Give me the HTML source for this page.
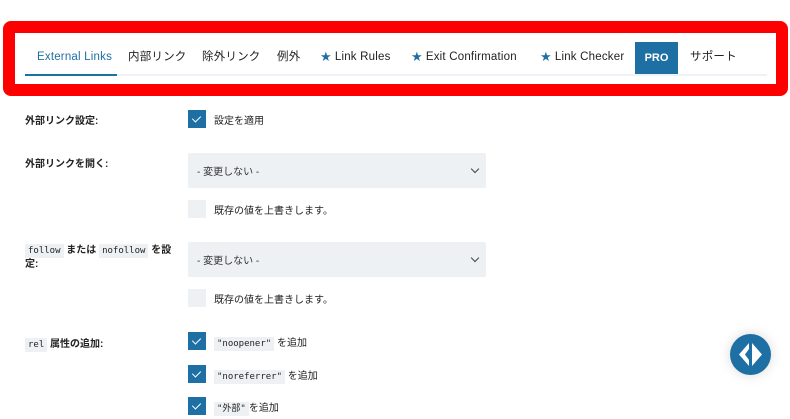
<!DOCTYPE html>
<html><head><meta charset="utf-8"><style>
*{margin:0;padding:0;box-sizing:border-box}
body{width:790px;height:419px;overflow:hidden;background:#fff;font-family:"Liberation Sans","Noto Sans CJK JP",sans-serif;color:#222;position:relative}
.abs{position:absolute}
.red{left:3px;top:21px;width:785px;height:75px;border:12px solid #f00;border-radius:8px}
.panel{left:15px;top:33px;width:761px;height:51px;background:#fff}
.tab{position:absolute;top:50px;height:15px;line-height:15px;font-size:11.5px;color:#222;white-space:nowrap;letter-spacing:0.2px;font-family:"Liberation Sans","Noto Sans CJK JP",sans-serif}
.star{color:#1e6fa3;font-size:13px;margin-right:3px;font-family:"DejaVu Sans",sans-serif;line-height:15px;vertical-align:top}
.lbl{position:absolute;left:25px;font-size:10px;font-weight:bold;color:#222}
.cb{position:absolute;left:188px;width:18px;height:18px;background:#edf1f4}
.cb.on{background:#1e6fa3}
.cb.on:after{content:"";position:absolute;left:6px;top:4px;width:4px;height:7px;border:solid #fff;border-width:0 1.5px 1.5px 0;transform:rotate(45deg)}
.t{position:absolute;left:214px;font-size:10px;color:#222;white-space:nowrap}
.sel{position:absolute;left:188px;width:298px;height:35px;background:#edf1f4;border-radius:2px;font-size:10px;padding:10px 9px;color:#333}
.sel:after{content:"";position:absolute;right:8px;top:13px;width:5px;height:5px;border:solid #444;border-width:0 1.3px 1.3px 0;transform:rotate(45deg)}
code{font-family:"DejaVu Sans Mono",monospace;font-size:9px;background:#eef1f3;padding:2px 3px;font-weight:normal}
</style></head><body>
<div class="abs red"></div>
<div class="abs panel"></div>
<div class="abs" style="left:25px;top:74px;width:742px;height:2px;background:#eef1f5"></div>
<div class="abs" style="left:25px;top:74px;width:92px;height:2px;background:#1e6fa3"></div>
<div class="tab" style="left:37px;color:#1e6fa3">External Links</div>
<div class="tab" style="left:128px">内部リンク</div>
<div class="tab" style="left:202px">除外リンク</div>
<div class="tab" style="left:277px">例外</div>
<div class="tab" style="left:320px"><span class="star">★</span>Link Rules</div>
<div class="tab" style="left:411px"><span class="star">★</span>Exit Confirmation</div>
<div class="tab" style="left:540px"><span class="star">★</span>Link Checker</div>
<div class="abs" style="left:635px;top:42px;width:43px;height:32px;background:#1e6fa3;color:#fff;font-size:11px;text-align:center;line-height:32px;font-weight:bold">PRO</div>
<div class="tab" style="left:690px">サポート</div>

<div class="lbl" style="top:112px">外部リンク設定:</div>
<div class="cb on" style="top:110px"></div><div class="t" style="top:112px">設定を適用</div>

<div class="lbl" style="top:155px">外部リンクを開く:</div>
<div class="sel" style="top:153px">- 変更しない -</div>
<div class="cb" style="top:200px"></div><div class="t" style="top:202px">既存の値を上書きします。</div>

<div class="lbl" style="top:244px;line-height:13px;width:150px"><code>follow</code> または <code>nofollow</code> を設<br>定:</div>
<div class="sel" style="top:242px">- 変更しない -</div>
<div class="cb" style="top:289px"></div><div class="t" style="top:291px">既存の値を上書きします。</div>

<div class="lbl" style="top:335px"><code>rel</code> 属性の追加:</div>
<div class="cb on" style="top:332px"></div><div class="t" style="top:334px"><code>"noopener"</code> を追加</div>
<div class="cb on" style="top:365px"></div><div class="t" style="top:367px"><code>"noreferrer"</code> を追加</div>
<div class="cb on" style="top:397px"></div><div class="t" style="top:399px"><code>"外部"</code>を追加</div>

<div class="abs" style="left:730px;top:334px;width:41px;height:41px;border-radius:50%;background:#1e6fa3;box-shadow:0 0 12px rgba(0,0,0,.15)">
<svg width="41" height="41" viewBox="0 0 41 41"><path d="M19 9 L9 20.5 L19 32 L19 26 L15 20.5 L19 15 Z" fill="#fff"/><path d="M22 9 L32 20.5 L22 32 Z" fill="#fff"/></svg>
</div>
</body></html>
